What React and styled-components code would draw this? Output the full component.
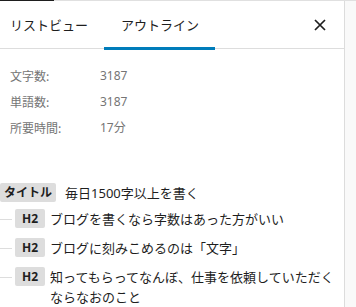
import * as React from 'react'
import styled, {createGlobalStyle} from 'styled-components'

const GlobalStyle = createGlobalStyle`
  html, body {
    margin: 0;
    padding: 0;
    background: #fff;
  }
  body {
    font-family: "Noto Sans", "Noto Sans CJK JP", sans-serif;
    color: #1e1e1e;
  }
`

const Frame = styled.div`
  display: flex;
  flex-direction: column;
  width: 356px;
  height: 307px;
  overflow: hidden;
`

const TopRule = styled.div`
  height: 1px;
  flex: none;
  background: #e0e0e0;
  display: flex;
`

const TopRuleMark = styled.div`
  width: 54px;
  background: #1e1e1e;
`

const Body = styled.div`
  display: flex;
  flex: 1;
  min-height: 0;
`

const Panel = styled.div`
  width: 344px;
  flex: none;
  border-right: 1px solid #dcdcdc;
  display: flex;
  flex-direction: column;
`

const Gutter = styled.div`
  flex: 1;
  background: #f9f9f9;
`

const TabBar = styled.div`
  display: flex;
  align-items: stretch;
  height: 48px;
  border-bottom: 1px solid #dddddd;
`

const Tab = styled.button`
  position: relative;
  border: 0;
  background: none;
  margin: 0;
  padding: ${p => (p.$first ? '0 16px 0 10px' : '0 16px 0 17px')};
  font-family: "Noto Sans CJK JP", sans-serif;
  font-size: 13px;
  color: #1e1e1e;
  cursor: pointer;

  &::after {
    content: '';
    position: absolute;
    left: 0;
    right: 0;
    bottom: -2px;
    height: 3px;
    background: ${p => (p.$active ? '#007cba' : 'transparent')};
  }
`

const CloseButton = styled.button`
  margin-left: auto;
  width: 36px;
  margin-right: 6px;
  border: 0;
  background: none;
  display: flex;
  align-items: center;
  justify-content: center;
  padding: 0;
  cursor: pointer;
`

const Stats = styled.dl`
  margin: 0;
  padding: 13px 10px 0;
  display: grid;
  grid-template-columns: 90px 1fr;
  grid-auto-rows: 26px;
  align-items: center;
  font-size: 12px;
  color: #757575;
`

const StatLabel = styled.dt`
  font-family: "Noto Sans CJK JP", sans-serif;
`

const StatValue = styled.dd`
  margin: 0;
  font-family: "Noto Sans", "Noto Sans CJK JP", sans-serif;
`

const Outline = styled.ul`
  list-style: none;
  margin: 43px 0 0;
  padding: 0 4px 0 0;
  display: flex;
  flex-direction: column;
  gap: 9px;
`

const Item = styled.li`
  display: flex;
  align-items: flex-start;
  font-size: 13px;
  line-height: 20px;
  margin-bottom: ${p => (p.$title ? '-3px' : '0')};
`

const Connector = styled.span`
  flex: none;
  width: 12px;
  height: 1px;
  margin-top: 10px;
  margin-right: 3px;
  background: #dddddd;
`

const Badge = styled.span`
  flex: none;
  height: 19px;
  line-height: 19px;
  padding: 0 ${p => (p.$wide ? '4px' : '7px')};
  margin-right: ${p => (p.$wide ? '9px' : '5px')};
  background: #dddddd;
  border-radius: 2px;
  font-family: "Noto Sans", "Noto Sans CJK JP", sans-serif;
  font-weight: 700;
  font-size: 12px;
  color: #1e1e1e;
`

const Heading = styled.span`
  font-family: "Noto Sans", "Noto Sans CJK JP", sans-serif;
  color: #1e1e1e;
`

const CloseIcon = () => (
  <svg width="12" height="12" viewBox="0 0 12 12" fill="none">
    <path d="M1 1L11 11M11 1L1 11" stroke="#1e1e1e" strokeWidth="1.7" />
  </svg>
)

const stats = [
  {label: '文字数:', value: '3187'},
  {label: '単語数:', value: '3187'},
  {label: '所要時間:', value: '17分'}
]

const headings = [
  'ブログを書くなら字数はあった方がいい',
  'ブログに刻みこめるのは「文字」',
  '知ってもらってなんぼ、仕事を依頼していただくならなおのこと'
]

export default function App() {
  return (
    <Frame>
      <GlobalStyle />
      <TopRule>
        <TopRuleMark />
      </TopRule>
      <Body>
        <Panel>
          <TabBar>
            <Tab $first>リストビュー</Tab>
            <Tab $active>アウトライン</Tab>
            <CloseButton aria-label="閉じる">
              <CloseIcon />
            </CloseButton>
          </TabBar>
          <Stats>
            {stats.map(s => (
              <React.Fragment key={s.label}>
                <StatLabel>{s.label}</StatLabel>
                <StatValue>{s.value}</StatValue>
              </React.Fragment>
            ))}
          </Stats>
          <Outline>
            <Item $title>
              <Badge $wide>タイトル</Badge>
              <Heading>毎日1500字以上を書く</Heading>
            </Item>
            {headings.map(h => (
              <Item key={h}>
                <Connector />
                <Badge>H2</Badge>
                <Heading>{h}</Heading>
              </Item>
            ))}
          </Outline>
        </Panel>
        <Gutter />
      </Body>
    </Frame>
  )
}
